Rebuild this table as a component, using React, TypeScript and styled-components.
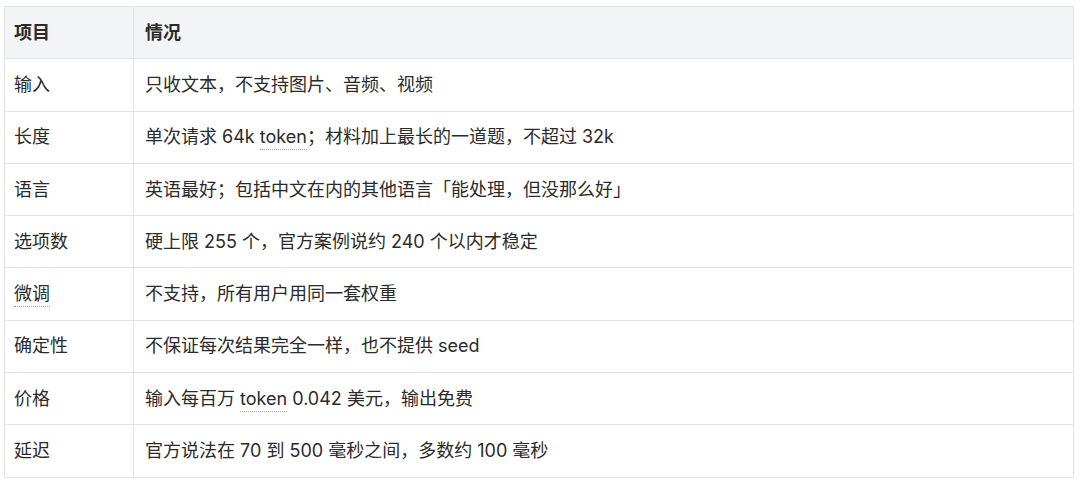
import styled, { createGlobalStyle } from 'styled-components'

const GlobalStyle = createGlobalStyle`
  html, body {
    margin: 0;
    padding: 0;
    background: #ffffff;
  }
  body {
    font-family: Inter, "Noto Sans CJK SC", sans-serif;
    color: #2b2b2b;
  }
`

const Page = styled.div`
  padding: 6px 6px 6px 4px;
`

const Table = styled.table`
  width: 1070px;
  border-collapse: collapse;
  font-size: 18px;
  line-height: 26px;
`

const Row = styled.tr`
  height: 52.3px;
`

const HeadCell = styled.th<{ $first?: boolean }>`
  background: #f3f4f5;
  border: 1px solid #e2e3e5;
  text-align: left;
  font-weight: 600;
  padding: 0 11px 0 ${p => (p.$first ? '9px' : '11px')};
  width: ${p => (p.$first ? '108px' : 'auto')};
`

const Cell = styled.td<{ $first?: boolean }>`
  border: 1px solid #e2e3e5;
  padding: 0 11px 0 ${p => (p.$first ? '9px' : '11px')};
  vertical-align: middle;
`

const Term = styled.abbr`
  text-decoration: none;
  border-bottom: 1px dotted #a0a0a0;
  padding-bottom: 2px;
`

type Item = {
  name: React.ReactNode
  detail: React.ReactNode
}

const items: Item[] = [
  { name: '输入', detail: '只收文本，不支持图片、音频、视频' },
  {
    name: '长度',
    detail: (
      <>
        单次请求 64k <Term>token</Term>；材料加上最长的一道题，不超过 32k
      </>
    ),
  },
  { name: '语言', detail: '英语最好；包括中文在内的其他语言「能处理，但没那么好」' },
  { name: '选项数', detail: '硬上限 255 个，官方案例说约 240 个以内才稳定' },
  { name: <Term>微调</Term>, detail: '不支持，所有用户用同一套权重' },
  { name: '确定性', detail: '不保证每次结果完全一样，也不提供 seed' },
  {
    name: '价格',
    detail: (
      <>
        输入每百万 <Term>token</Term> 0.042 美元，输出免费
      </>
    ),
  },
  { name: '延迟', detail: '官方说法在 70 到 500 毫秒之间，多数约 100 毫秒' },
]

const App = () => {
  return (
    <Page>
      <GlobalStyle />
      <Table>
        <thead>
          <Row>
            <HeadCell $first>项目</HeadCell>
            <HeadCell>情况</HeadCell>
          </Row>
        </thead>
        <tbody>
          {items.map((item, i) => (
            <Row key={i}>
              <Cell $first>{item.name}</Cell>
              <Cell>{item.detail}</Cell>
            </Row>
          ))}
        </tbody>
      </Table>
    </Page>
  )
}

export default App
